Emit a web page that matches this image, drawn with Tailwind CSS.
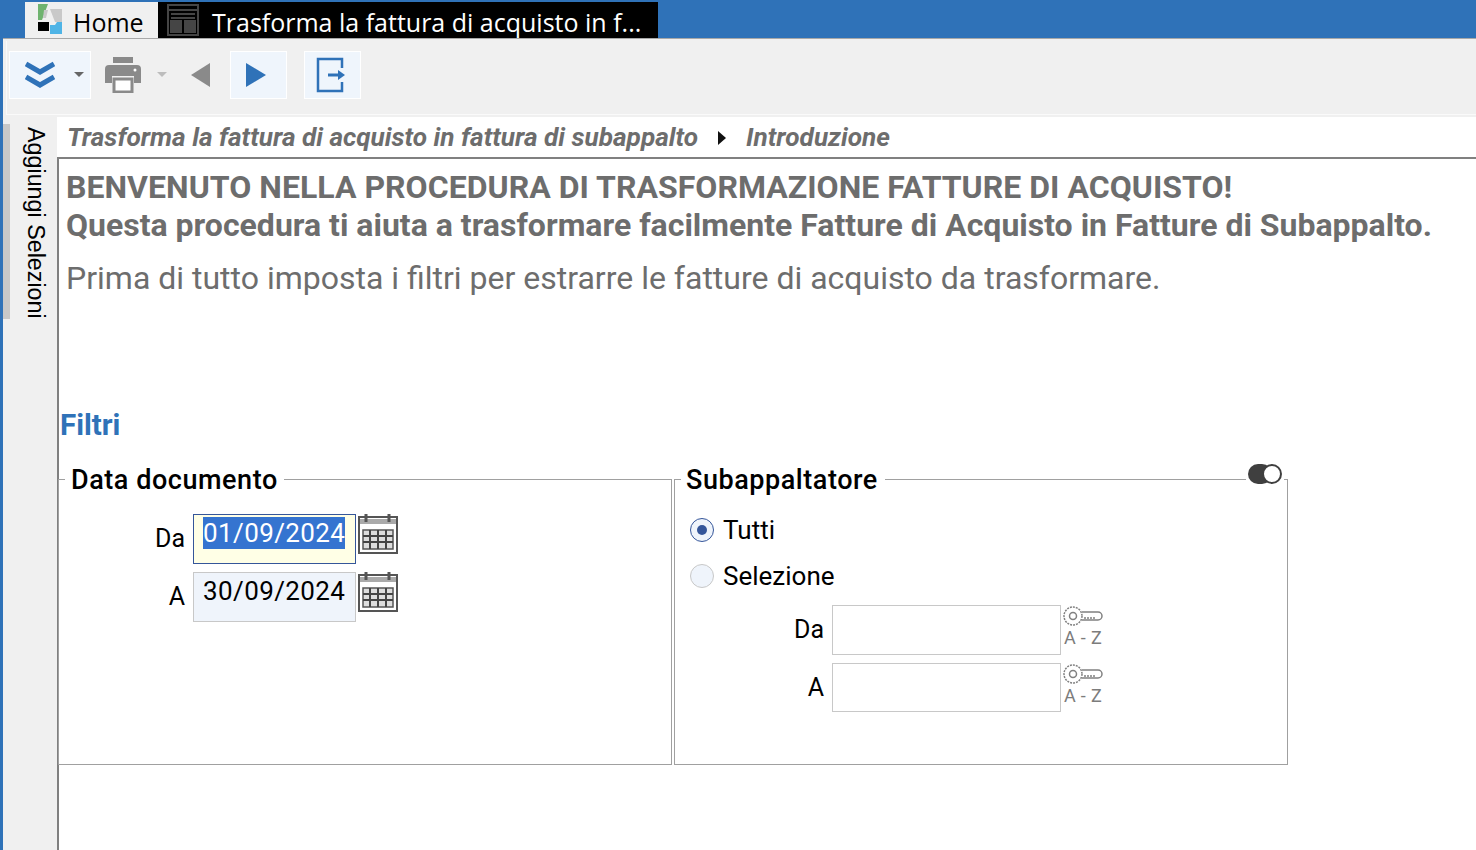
<!DOCTYPE html>
<html lang="it">
<head>
  <meta charset="UTF-8" />
  <title>Trasforma la fattura di acquisto</title>
  <script src="https://cdn.jsdelivr.net/npm/@tailwindcss/browser@4"></script>
</head>
<body class="m-0 overflow-hidden">
  <div class="w-[1476px] h-[850px] overflow-hidden flex flex-col bg-[#f0f0f0] border-l-[3px] border-[#2f72b8] font-['Roboto',sans-serif]">

    <!-- title bar with tabs -->
    <div class="h-[38px] shrink-0 bg-[#2f72b8] pl-[22px] pt-[2px] flex">
      <div class="w-[133px] h-[36px] bg-[#f0f0f0] flex items-start pl-[13px]">
        <svg class="mt-[2px]" width="24" height="30" viewBox="0 0 24 30">
          <polygon points="0,0 10,0 4,16 0,16" fill="#6fb36f"/>
          <polygon points="12,5 24,5 24,18 17,18" fill="#c9c9c9"/>
          <polygon points="6,6 10,6 8,14 5,14" fill="#c9c9c9"/>
          <rect x="0" y="18" width="11" height="9" fill="#000"/>
          <polygon points="12,21 17,21 19,18 24,18 24,30 12,30" fill="#4fb4e6"/>
        </svg>
        <span class="ml-[11px] mt-[5px] text-[25px] leading-[30px] text-black font-['Open_Sans',sans-serif]">Home</span>
      </div>
      <div class="w-[500px] h-[36px] bg-black flex items-start pl-[9px]">
        <svg class="mt-[2px]" width="32" height="32" viewBox="0 0 32 32" fill="none" stroke="#454545" stroke-width="2">
          <rect x="1" y="1" width="30" height="30"/>
          <path d="M1 6h30M4 10h24M4 14h24"/>
          <rect x="4" y="17" width="10" height="11" fill="#454545"/>
          <rect x="18" y="17" width="10" height="11" fill="#454545"/>
          <path d="M16 15v14" stroke="#000"/>
        </svg>
        <span class="ml-[13px] mt-[5px] text-[25px] leading-[30px] text-white whitespace-nowrap font-['Open_Sans',sans-serif]">Trasforma la fattura di acquisto in f...</span>
      </div>
    </div>
    <div class="h-[1px] shrink-0 bg-[#a8a8a8]"></div>

    <!-- toolbar -->
    <div class="h-[78px] shrink-0 pl-[3px] pt-[2px]">
      <div class="h-[74px] border-b border-l border-[#fafafa] pl-[2px] pt-[10px] flex items-start">
        <div class="w-[82px] h-[48px] bg-[#eff5fc] border border-white flex items-center pl-[15px]">
          <svg width="30" height="28" viewBox="0 0 30 28" fill="none" stroke="#2f72b8" stroke-width="5">
            <path d="M1 3l14 8 14-8M1 16l14 8 14-8"/>
          </svg>
          <svg class="ml-[19px]" width="10" height="6" viewBox="0 0 10 6"><polygon points="0,0 10,0 5,5" fill="#666"/></svg>
        </div>
        <svg class="ml-[14px] mt-[6px]" width="36" height="36" viewBox="0 0 36 36">
          <rect x="8" y="0" width="20" height="6" fill="#8a8a8a"/>
          <path d="M4 8h28a4 4 0 0 1 4 4v14h-7v-7H7v7H0V12a4 4 0 0 1 4-4z" fill="#8a8a8a"/>
          <rect x="9" y="22" width="18" height="13" fill="#fff" stroke="#8a8a8a" stroke-width="3"/>
          <circle cx="30" cy="13" r="1.5" fill="#fff"/>
        </svg>
        <svg class="ml-[16px] mt-[21px]" width="10" height="6" viewBox="0 0 10 6"><polygon points="0,0 10,0 5,5" fill="#bdbdbd"/></svg>
        <svg class="ml-[24px] mt-[12px]" width="19" height="24" viewBox="0 0 19 24"><polygon points="19,0 19,24 0,12" fill="#8a8a8a"/></svg>
        <div class="ml-[20px] w-[57px] h-[48px] bg-[#eff5fc] border border-white flex items-center pl-[15px]">
          <svg width="20" height="24" viewBox="0 0 20 24"><polygon points="0,0 20,12 0,24" fill="#2f72b8"/></svg>
        </div>
        <div class="ml-[17px] w-[57px] h-[48px] bg-[#eff5fc] border border-white flex items-center pl-[11px]">
          <svg width="30" height="36" viewBox="0 0 30 36" fill="none" stroke="#2f72b8" stroke-width="2.5">
            <path d="M26 11V2H2v32h24v-9"/>
            <path d="M12 18h13" stroke-width="3"/>
            <polygon points="22,13 29,18 22,23" fill="#2f72b8" stroke="none"/>
          </svg>
        </div>
      </div>
    </div>

    <!-- main area -->
    <div class="flex-1 flex min-h-0">
      <!-- side strip -->
      <div class="w-[54px] shrink-0 flex items-start pt-[7px]">
        <div class="w-[7px] h-[195px] bg-[#c8c8c8]"></div>
        <div class="ml-[13px] mt-[3px] [writing-mode:vertical-rl] text-[23.3px] leading-[26px] text-black font-['Liberation_Sans',sans-serif] whitespace-nowrap">Aggiungi Selezioni</div>
      </div>

      <div class="flex-1 min-w-0 flex flex-col">
        <!-- breadcrumb -->
        <div class="h-[40px] shrink-0 bg-white flex items-center pl-[10px] pt-[1px] text-[26.2px] font-bold italic text-[#6d6d6d] whitespace-nowrap">
          <span>Trasforma la fattura di acquisto in fattura di subappalto</span>
          <svg class="ml-[20px] mr-[20px]" width="8" height="14" viewBox="0 0 8 14"><polygon points="0,0 8,7 0,14" fill="#111"/></svg>
          <span>Introduzione</span>
        </div>

        <!-- page -->
        <div class="flex-1 bg-white border-t-2 border-l-2 border-[#808080] min-h-0">
          <div class="pl-[7px] pt-[9px] text-[#6d6d6d] whitespace-nowrap">
            <h1 class="text-[32px] leading-[38px] tracking-[0.03px] font-bold m-0">BENVENUTO NELLA PROCEDURA DI TRASFORMAZIONE FATTURE DI ACQUISTO!</h1>
            <h2 class="text-[32px] leading-[38px] font-bold m-0">Questa procedura ti aiuta a trasformare facilmente Fatture di Acquisto in Fatture di Subappalto.</h2>
            <p class="mt-[15px] text-[32px] leading-[38px] m-0">Prima di tutto imposta i filtri per estrarre le fatture di acquisto da trasformare.</p>
          </div>

          <div class="mt-[111px] text-[29.5px] leading-[34px] font-bold text-[#2f72b8] pl-[1px]">Filtri</div>

          <!-- filter boxes -->
          <div class="mt-[22px] flex gap-[2px] items-start -ml-[1px]">
            <fieldset class="w-[614px] h-[301px] border border-[#a0a0a0] pl-[6px] m-0">
              <legend class="relative top-[1px] text-[27px] leading-[30px] font-medium tracking-[0.55px] text-black px-[6px]">Data documento</legend>
              <div class="mt-[20px] grid grid-cols-[120px_163px_auto] gap-x-[8px] gap-y-[8px] items-start">
                <label class="text-[25px] leading-[50px] text-right text-black h-[50px]">Da</label>
                <div class="h-[50px] bg-[#ffffe6] border border-[#35569a] px-[9px] pt-[2px]">
                  <span class="inline-block bg-[#3574d0] text-white text-[26px] leading-[32px] tracking-[0.4px]">01/09/2024</span>
                </div>
                <svg class="-ml-[6px]" width="40" height="40" viewBox="0 0 40 40">
                  <rect x="1" y="3" width="38" height="36" fill="#fff" stroke="#555" stroke-width="2"/>
                  <rect x="2" y="5" width="36" height="5" fill="#aaa"/>
                  <path d="M8 0v8M31 0v8" stroke="#555" stroke-width="3"/>
                  <rect x="5" y="16" width="30" height="19" fill="#ddd" stroke="#555" stroke-width="1.5"/>
                  <path d="M5 22h30M5 28h30M12 16v19M20 16v19M28 16v19" stroke="#444" stroke-width="2"/>
                </svg>
                <label class="text-[25px] leading-[50px] text-right text-black h-[50px]">A</label>
                <div class="h-[50px] bg-[#eff4fb] border border-[#c8c8c8] px-[9px] pt-[2px]">
                  <span class="inline-block text-black text-[26px] leading-[32px] tracking-[0.4px]">30/09/2024</span>
                </div>
                <svg class="-ml-[6px]" width="40" height="40" viewBox="0 0 40 40">
                  <rect x="1" y="3" width="38" height="36" fill="#fff" stroke="#555" stroke-width="2"/>
                  <rect x="2" y="5" width="36" height="5" fill="#aaa"/>
                  <path d="M8 0v8M31 0v8" stroke="#555" stroke-width="3"/>
                  <rect x="5" y="16" width="30" height="19" fill="#ddd" stroke="#555" stroke-width="1.5"/>
                  <path d="M5 22h30M5 28h30M12 16v19M20 16v19M28 16v19" stroke="#444" stroke-width="2"/>
                </svg>
              </div>
            </fieldset>

            <fieldset class="relative w-[614px] h-[301px] border border-[#a0a0a0] pl-[6px] m-0">
              <legend class="relative top-[1px] -left-[1px] text-[27px] leading-[30px] font-medium tracking-[0.55px] text-black px-[6px]">Subappaltatore</legend>
              <!-- toggle on the border -->
              <div class="absolute right-[3px] -top-[31px] w-[38px] h-[22px] bg-white flex items-center justify-center">
                <div class="relative w-[34px] h-[20px]">
                  <div class="absolute left-0 top-0 w-[24px] h-[20px] rounded-full bg-[#3f3f3f]"></div>
                  <div class="absolute right-0 top-0 w-[20px] h-[20px] rounded-full bg-white border-2 border-[#3f3f3f]"></div>
                </div>
              </div>
              <div class="mt-[23px] pl-[9px] flex flex-col gap-[20px]">
                <div class="flex items-center h-[26px]">
                  <span class="w-[24px] h-[24px] rounded-full border border-[#35569a] bg-[#eff4fb] flex items-center justify-center">
                    <span class="w-[10px] h-[10px] rounded-full bg-[#35569a]"></span>
                  </span>
                  <span class="ml-[9px] text-[26px] leading-none text-black">Tutti</span>
                </div>
                <div class="flex items-center h-[26px]">
                  <span class="w-[24px] h-[24px] rounded-full border border-[#c8c8c8] bg-[#eff4fb]"></span>
                  <span class="ml-[9px] text-[26px] leading-none text-black">Selezione</span>
                </div>
              </div>
              <div class="mt-[16px] grid grid-cols-[143px_229px_auto] gap-x-[8px] gap-y-[8px] items-start">
                <label class="text-[25px] leading-[50px] text-right text-black h-[50px]">Da</label>
                <div class="h-[50px] bg-white border border-[#c8c8c8]"></div>
                <div class="-ml-[6px] w-[40px] text-center">
                  <svg class="block" width="40" height="22" viewBox="0 0 40 22" fill="none" stroke="#808080" stroke-width="1.5">
                    <circle cx="10" cy="11" r="9" stroke-dasharray="2 1"/>
                    <circle cx="10" cy="11" r="3.5"/>
                    <path d="M19 7h16a4 4 0 0 1 0 8H19"/>
                    <path d="M21 13h12" stroke-dasharray="2 1"/>
                  </svg>
                  <div class="mt-[1px] text-[18px] leading-[20px] text-[#7c7c7c] tracking-[0.3px] whitespace-nowrap">A - Z</div>
                </div>
                <label class="text-[25px] leading-[49px] text-right text-black h-[49px]">A</label>
                <div class="h-[49px] bg-white border border-[#c8c8c8]"></div>
                <div class="-ml-[6px] w-[40px] text-center">
                  <svg class="block" width="40" height="22" viewBox="0 0 40 22" fill="none" stroke="#808080" stroke-width="1.5">
                    <circle cx="10" cy="11" r="9" stroke-dasharray="2 1"/>
                    <circle cx="10" cy="11" r="3.5"/>
                    <path d="M19 7h16a4 4 0 0 1 0 8H19"/>
                    <path d="M21 13h12" stroke-dasharray="2 1"/>
                  </svg>
                  <div class="mt-[1px] text-[18px] leading-[20px] text-[#7c7c7c] tracking-[0.3px] whitespace-nowrap">A - Z</div>
                </div>
              </div>
            </fieldset>
          </div>
        </div>
      </div>
    </div>
  </div>
</body>
</html>
